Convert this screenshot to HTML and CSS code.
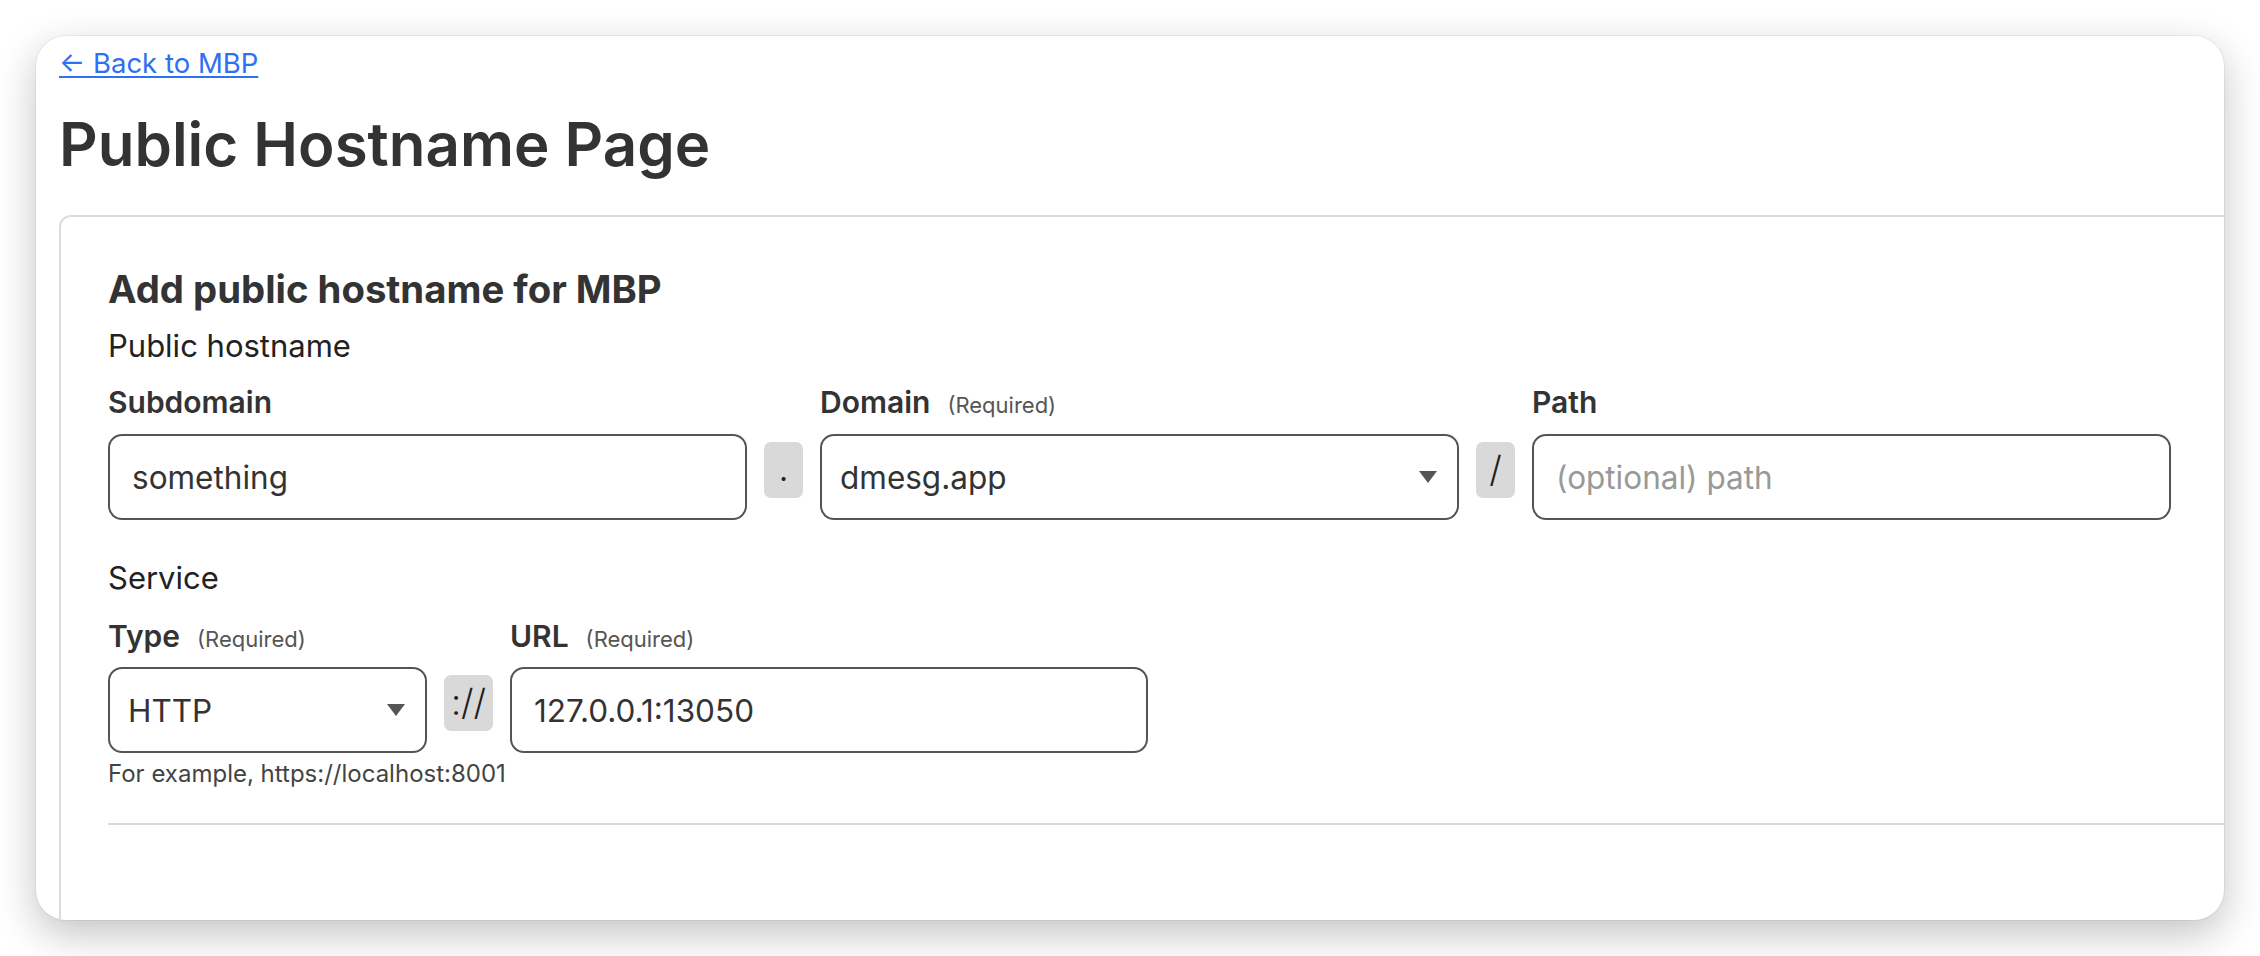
FILE: index.html
```html
<!DOCTYPE html>
<html lang="en">
<head>
<meta charset="utf-8">
<title>Public Hostname Page</title>
<link rel="stylesheet" href="styles.css">
</head>
<body>
<div class="window">
  <div class="content">
    <div class="back-row"><a class="back" href="#">← Back to MBP</a></div>
    <h1 class="title">Public Hostname Page</h1>
    <section class="card">
      <h2 class="card-title">Add public hostname for MBP</h2>
      <div class="group-title">Public hostname</div>
      <div class="row row-host">
        <div class="field w-full">
          <div class="label"><span class="label-name">Subdomain</span></div>
          <input class="input" type="text" value="something">
        </div>
        <div class="sep">.</div>
        <div class="field w-full">
          <div class="label"><span class="label-name">Domain</span><span class="label-req">(Required)</span></div>
          <div class="select"><span>dmesg.app</span><svg class="caret" viewBox="0 0 18 12"><path d="M0 0H18L9 12Z" fill="#555"/></svg></div>
        </div>
        <div class="sep sep-slash">/</div>
        <div class="field w-full">
          <div class="label"><span class="label-name">Path</span></div>
          <input class="input" type="text" placeholder="(optional) path">
        </div>
      </div>
      <div class="group-title service-title">Service</div>
      <div class="row row-service">
        <div class="field w-half">
          <div class="label"><span class="label-name">Type</span><span class="label-req">(Required)</span></div>
          <div class="select"><span>HTTP</span><svg class="caret" viewBox="0 0 18 12"><path d="M0 0H18L9 12Z" fill="#555"/></svg></div>
        </div>
        <div class="sep sep-wide">://</div>
        <div class="field w-url">
          <div class="label"><span class="label-name">URL</span><span class="label-req">(Required)</span></div>
          <input class="input" type="text" value="127.0.0.1:13050">
        </div>
      </div>
      <div class="help">For example, https://localhost:8001</div>
      <hr class="divider">
    </section>
  </div>
</div>
</body>
</html>
```

FILE: styles.css
```css
* { box-sizing: border-box; }
html, body { margin: 0; padding: 0; }
body {
  background: #ffffff;
  font-family: "Inter", "Liberation Sans", sans-serif;
  color: #333;
  padding: 36px 0 0 36px;
  height: 956px;
  overflow: hidden;
}
.window {
  width: 2188px;
  height: 884px;
  background: #fff;
  border-radius: 30px;
  overflow: hidden;
  box-shadow: 0 14px 40px rgba(0, 0, 0, 0.24), 0 0 0 1px rgba(0, 0, 0, 0.05);
}
.content {
  padding: 10px 0 0 23px;
}
.back-row {
  height: 34px;
  font-size: 27.5px;
  line-height: 34px;
}
.back {
  color: #2f6ff1;
  text-decoration: underline;
  text-decoration-thickness: 2px;
  text-underline-offset: 3px;
}
.title {
  margin: 28px 0 0;
  font-size: 60px;
  line-height: 72px;
  font-weight: 600;
  color: #333;
}
.card {
  margin: 35px -120px 0 0;
  border: 2px solid #dcdcdc;
  border-radius: 12px;
  padding: 50px 47px 120px;
}
.card-title {
  margin: 0;
  font-size: 38.3px;
  line-height: 44px;
  font-weight: 700;
  color: #333;
}
.group-title {
  margin-top: 17px;
  font-size: 31px;
  line-height: 36px;
  color: #222;
}
.row {
  display: flex;
  align-items: flex-end;
  gap: 17px;
}
.row-host { margin-top: 20px; }
.field {
  display: flex;
  flex-direction: column;
}
.w-full { width: 639px; }
.w-half { width: 319px; }
.w-url { width: 638px; }
.label {
  display: flex;
  align-items: baseline;
  gap: 17px;
  height: 36px;
  margin-bottom: 14px;
}
.label-name {
  font-size: 30px;
  line-height: 36px;
  font-weight: 600;
  color: #333;
}
.label-req {
  font-size: 22px;
  color: #555;
}
.input, .select {
  height: 86px;
  border: 2px solid #555;
  border-radius: 14px;
  font-family: inherit;
  font-size: 31.5px;
  color: #333;
  background: #fff;
}
.input {
  width: 100%;
  padding: 0 22px;
  outline: none;
}
.input::placeholder { color: #999; }
.select {
  display: flex;
  align-items: center;
  justify-content: space-between;
  padding: 0 20px 0 18px;
}
.caret {
  width: 18px;
  height: 12px;
}
.sep {
  width: 39px;
  height: 56px;
  margin-bottom: 22px;
  background: #d9d9d9;
  border-radius: 7px;
  display: flex;
  justify-content: center;
  font-size: 30px;
  line-height: 56px;
  color: #1f1f1f;
}
.sep-slash {
  font-size: 36px;
  font-weight: 300;
  line-height: 54px;
}
.sep-wide {
  width: 49px;
  font-size: 36px;
  font-weight: 300;
  line-height: 54px;
}
.service-title { margin-top: 40px; }
.row-service { margin-top: 22px; }
.row-service .label { margin-bottom: 13px; }
.help {
  margin-top: 7px;
  font-size: 24px;
  line-height: 28px;
  color: #444;
}
.divider {
  margin: 35px 0 0;
  height: 2px;
  border: 0;
  background: #d9d9d9;
}
```
